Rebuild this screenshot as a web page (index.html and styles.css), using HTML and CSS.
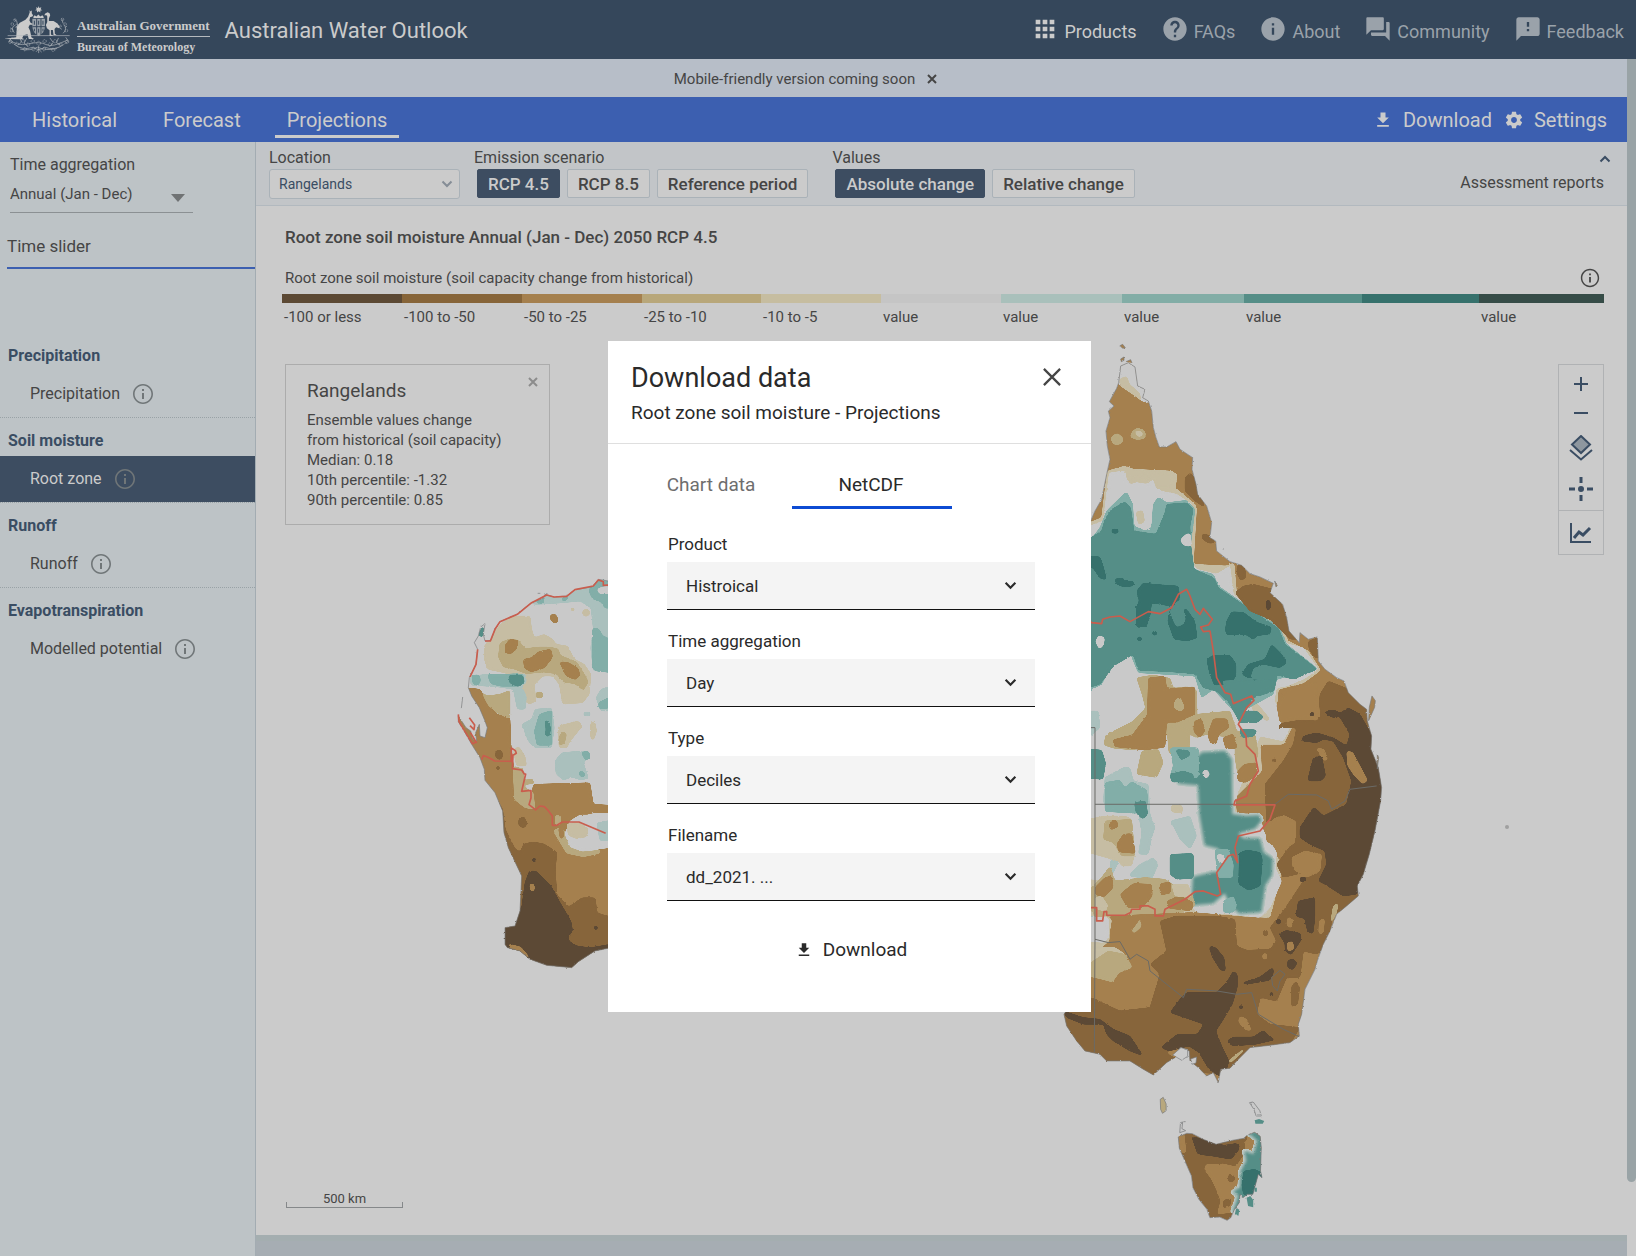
FILE: index.html
```html
<!DOCTYPE html>
<html lang="en">
  <head>
    <title>Australian Water Outlook</title>
    <meta charset="utf-8">
    <meta name="viewport" content="width=device-width, initial-scale=1">
    <link rel="stylesheet" href="styles.css">
  </head>
  <body>

  <!-- shared icons -->
  <svg class="sprite" aria-hidden="true">
    <symbol id="i-apps" viewBox="0 0 24 24"><path d="M4 8h4V4H4v4zm6 12h4v-4h-4v4zm-6 0h4v-4H4v4zm0-6h4v-4H4v4zm6 0h4v-4h-4v4zm6-10v4h4V4h-4zm-6 4h4V4h-4v4zm6 6h4v-4h-4v4zm0 6h4v-4h-4v4z"/></symbol>
    <symbol id="i-help" viewBox="0 0 24 24"><path d="M12 2C6.48 2 2 6.48 2 12s4.48 10 10 10 10-4.48 10-10S17.52 2 12 2zm1 17h-2v-2h2v2zm2.07-7.75l-.9.92C13.45 12.9 13 13.5 13 15h-2v-.5c0-1.1.45-2.1 1.17-2.83l1.24-1.26c.37-.36.59-.86.59-1.41 0-1.1-.9-2-2-2s-2 .9-2 2H8c0-2.21 1.79-4 4-4s4 1.79 4 4c0 .88-.36 1.68-.93 2.25z"/></symbol>
    <symbol id="i-info" viewBox="0 0 24 24"><path d="M12 2C6.48 2 2 6.48 2 12s4.48 10 10 10 10-4.48 10-10S17.52 2 12 2zm1 15h-2v-6h2v6zm0-8h-2V7h2v2z"/></symbol>
    <symbol id="i-forum" viewBox="0 0 24 24"><path d="M21 6h-2v9H6v2c0 .55.45 1 1 1h11l4 4V7c0-.55-.45-1-1-1zm-4 6V3c0-.55-.45-1-1-1H3c-.55 0-1 .45-1 1v14l4-4h10c.55 0 1-.45 1-1z"/></symbol>
    <symbol id="i-feedback" viewBox="0 0 24 24"><path d="M20 2H4c-1.1 0-1.99.9-1.99 2L2 22l4-4h14c1.1 0 2-.9 2-2V4c0-1.1-.9-2-2-2zm-7 12h-2v-2h2v2zm0-4h-2V6h2v4z"/></symbol>
    <symbol id="i-download" viewBox="0 0 24 24"><path d="M19 9h-4V3H9v6H5l7 7 7-7zM5 18v2h14v-2H5z"/></symbol>
    <symbol id="i-settings" viewBox="0 0 24 24"><path d="M19.43 12.98c.04-.32.07-.64.07-.98s-.03-.66-.07-.98l2.11-1.65c.19-.15.24-.42.12-.64l-2-3.46c-.12-.22-.39-.3-.61-.22l-2.49 1c-.52-.4-1.08-.73-1.69-.98l-.38-2.65C14.46 2.18 14.25 2 14 2h-4c-.25 0-.46.18-.49.42l-.38 2.65c-.61.25-1.17.59-1.69.98l-2.49-1c-.23-.09-.49 0-.61.22l-2 3.46c-.13.22-.07.49.12.64l2.11 1.65c-.04.32-.07.65-.07.98s.03.66.07.98l-2.11 1.65c-.19.15-.24.42-.12.64l2 3.46c.12.22.39.3.61.22l2.49-1c.52.4 1.08.73 1.69.98l.38 2.65c.03.24.24.42.49.42h4c.25 0 .46-.18.49-.42l.38-2.65c.61-.25 1.17-.59 1.69-.98l2.49 1c.23.09.49 0 .61-.22l2-3.46c.12-.22.07-.49-.12-.64l-2.11-1.65zM12 15.5c-1.93 0-3.5-1.57-3.5-3.5s1.57-3.5 3.5-3.5 3.5 1.57 3.5 3.5-1.57 3.5-3.5 3.5z"/></symbol>
    <symbol id="i-info-o" viewBox="0 0 24 24"><path d="M11 17h2v-6h-2v6zm1-15C6.48 2 2 6.48 2 12s4.48 10 10 10 10-4.48 10-10S17.52 2 12 2zm0 18.400c-4.630 0-8.400-3.770-8.400-8.400s3.770-8.400 8.400-8.400 8.400 3.770 8.400 8.400-3.770 8.400-8.400 8.400zM11 9h2V7h-2v2z"/></symbol>
    <symbol id="i-chevron" viewBox="0 0 12 12"><path d="M1.500 3.500L6 8l4.500-4.500" fill="none" stroke="currentColor" stroke-width="2"/></symbol>
    <symbol id="i-close" viewBox="0 0 20 20"><path d="M1 1l18 18M19 1L1 19" fill="none" stroke="currentColor" stroke-width="2.500"/></symbol>
    <symbol id="i-close-bold" viewBox="0 0 10 10"><path d="M1 1l8 8M9 1L1 9" fill="none" stroke="currentColor" stroke-width="2"/></symbol>
  </svg>

  <header class="masthead">
    <svg class="crest" viewBox="14 12 206 156" aria-label="Commonwealth Coat of Arms" role="img">
      <path d="M116 17l2 6 6-2-2 6 5 3-6 1 0 6-5-4-5 4 0-6-6-1 5-3-2-6 6 2z"/>
      <path d="M88 30l4 4 3-4 0 9 4 6-2 4-7 2-2 10 4 8 7 2-1 3-9 0-4 8 5 10 4 20 8 5-16 0-4-14-12 3-4 9 8 3-16 0-46-1 36-5 2-34 9-10 17-9 8-9 5-14z"/>
      <path d="M136 40l7-4 6 3 2 6-4 10 0 8 14 0 12 7 7 10-2 5-9-3-5 5 1 14 6 5-10-1-2-15-6 0 0 14 8 4-12 0 0-17-8-6-3-10 4-9 0-17-2-4-7 0z"/>
      <path d="M97 56h38v22q0 21-19 30-19-9-19-30z" class="shield"/>
      <path class="shield-line" d="M97 80h38M110 56v50M123 56v50M103 62v12M116 62v12M129 62v12M103 86v8M116 86v12M129 86v8"/>
      <path d="M100 50l4-5 5 4 6-6 6 6 6-4 4 5v4h-31z"/>
      <path class="twig" d="M22 107h188M28 118q20 22 56 14t54 2 66-14M40 132q26 22 60 10 16 14 34 0 30 12 58-8M60 148q30 6 52-6 28 12 60 4M116 138v22M108 156l8-8 9 9M36 112l-10 12 12 6M58 112l6 14-10 10M80 114l-8 16 12 10M150 114l10 14-10 12M176 114l-6 14 12 8M198 112l8 12-12 8M42 98q-12-16 2-22M38 88l-8-4M46 84l6-6-2-14-8-6M50 96l8-10M190 100q14-14 2-26M186 88l-8-6M196 82l6-4M190 70l-4-14"/>
      <g class="leaves"><circle cx="44" cy="60" r="4"/><circle cx="36" cy="72" r="4"/><circle cx="50" cy="76" r="4"/><circle cx="34" cy="92" r="4"/><circle cx="188" cy="58" r="4"/><circle cx="196" cy="72" r="4"/><circle cx="182" cy="78" r="3"/><circle cx="200" cy="92" r="4"/><circle cx="30" cy="126" r="5"/><circle cx="50" cy="132" r="5"/><circle cx="68" cy="124" r="5"/><circle cx="84" cy="134" r="5"/><circle cx="74" cy="148" r="5"/><circle cx="98" cy="124" r="5"/><circle cx="100" cy="148" r="5"/><circle cx="116" cy="130" r="6"/><circle cx="132" cy="148" r="5"/><circle cx="134" cy="124" r="5"/><circle cx="150" cy="134" r="5"/><circle cx="166" cy="124" r="5"/><circle cx="160" cy="150" r="5"/><circle cx="182" cy="134" r="5"/><circle cx="202" cy="126" r="5"/></g>
    </svg>
    <div class="agency">
      <span class="agency-gov">Australian Government</span>
      <span class="agency-bom">Bureau of Meteorology</span>
    </div>
    <h1 class="site-title">Australian Water Outlook</h1>
    <nav class="topnav" aria-label="Site">
      <a href="#" class="active"><svg><use href="#i-apps"/></svg>Products</a>
      <a href="#"><svg><use href="#i-help"/></svg>FAQs</a>
      <a href="#"><svg><use href="#i-info"/></svg>About</a>
      <a href="#"><svg><use href="#i-forum"/></svg>Community</a>
      <a href="#"><svg><use href="#i-feedback"/></svg>Feedback</a>
    </nav>
  </header>

  <div class="viewport">
    <div class="page">

      <div class="notice">
        Mobile-friendly version coming soon
        <button type="button" aria-label="Dismiss"><svg><use href="#i-close-bold"/></svg></button>
      </div>

      <div class="tabs">
        <a href="#">Historical</a>
        <a href="#">Forecast</a>
        <a href="#" class="active">Projections</a>
        <div class="tools">
          <button type="button"><svg><use href="#i-download"/></svg>Download</button>
          <button type="button"><svg><use href="#i-settings"/></svg>Settings</button>
        </div>
      </div>

      <div class="columns">

        <aside class="sidebar">
          <div class="aggregation">
            <label for="side-agg">Time aggregation</label>
            <div class="select">
              <select id="side-agg"><option>Annual (Jan - Dec)</option></select>
              <svg viewBox="0 0 14 8"><path d="M0 0h14L7 8z"/></svg>
            </div>
          </div>
          <h2 class="slider-title">Time slider</h2>

          <section class="group">
            <h3>Precipitation</h3>
            <a href="#">Precipitation <svg><use href="#i-info-o"/></svg></a>
          </section>
          <section class="group">
            <h3>Soil moisture</h3>
            <a href="#" class="active">Root zone <svg><use href="#i-info-o"/></svg></a>
          </section>
          <section class="group">
            <h3>Runoff</h3>
            <a href="#">Runoff <svg><use href="#i-info-o"/></svg></a>
          </section>
          <section class="group">
            <h3>Evapotranspiration</h3>
            <a href="#">Modelled potential <svg><use href="#i-info-o"/></svg></a>
          </section>
        </aside>

        <main class="content">
          <div class="filters">
            <div class="filter location">
              <label for="location">Location</label>
              <div class="select">
                <select id="location"><option>Rangelands</option></select>
                <svg><use href="#i-chevron"/></svg>
              </div>
            </div>
            <div class="filter">
              <span class="filter-label">Emission scenario</span>
              <div class="choices">
                <button type="button" class="active">RCP 4.5</button>
                <button type="button">RCP 8.5</button>
                <button type="button">Reference period</button>
              </div>
            </div>
            <div class="filter">
              <span class="filter-label">Values</span>
              <div class="choices">
                <button type="button" class="active">Absolute change</button>
                <button type="button">Relative change</button>
              </div>
            </div>
            <div class="reports">
              <button type="button" aria-label="Collapse filters"><svg><use href="#i-chevron"/></svg></button>
              <a href="#">Assessment reports</a>
            </div>
          </div>

          <div class="legend">
            <h2>Root zone soil moisture Annual (Jan - Dec) 2050 RCP 4.5</h2>
            <div class="legend-head">
              <span>Root zone soil moisture (soil capacity change from historical)</span>
              <svg><use href="#i-info-o"/></svg>
            </div>
            <ol class="scale">
              <li class="s1">-100 or less</li>
              <li class="s2">-100 to -50</li>
              <li class="s3">-50 to -25</li>
              <li class="s4">-25 to -10</li>
              <li class="s5">-10 to -5</li>
              <li class="s6">value</li>
              <li class="s7">value</li>
              <li class="s8">value</li>
              <li class="s9">value</li>
              <li class="s10"></li>
              <li class="s11">value</li>
            </ol>
          </div>

          <div class="stage">
            <svg class="map" viewBox="256 340 1371 895" preserveAspectRatio="xMinYMin meet" role="img" aria-label="Map of Australia">
              <defs>
                <filter id="rough" x="-5%" y="-5%" width="110%" height="110%" color-interpolation-filters="sRGB">
                  <feTurbulence type="fractalNoise" baseFrequency=".12" numOctaves="3" seed="4"/>
                  <feDisplacementMap in="SourceGraphic" scale="6" xChannelSelector="R" yChannelSelector="G"/>
                </filter>
                <!-- rounds off the corners of a contour -->
                <filter id="soften" x="-20%" y="-20%" width="140%" height="140%" color-interpolation-filters="sRGB">
                  <feGaussianBlur stdDeviation="5"/>
                  <feComponentTransfer><feFuncA type="linear" slope="12" intercept="-4.300"/></feComponentTransfer>
                </filter>
                <path id="west" d="M570 70L534 90 505 85 490 103 485 108 435 116 410 135 372 138 345 130 340 142 305 155 285 170 262 190 210 212 195 235 183 268 165 270 160 250 165 218 152 228 145 255 133 275 143 295 138 340 118 380 115 410 125 435 148 470 165 510 172 530 165 560 150 555 148 520 137 545 140 570 128 565 122 540 108 530 85 495 85 512 105 545 125 580 150 620 163 655 165 688 195 725 218 780 222 845 235 890 275 975 272 1040 270 1080 255 1125 225 1130 225 1180 232 1190 270 1200 300 1225 350 1243 425 1250 445 1232 495 1200 534 1192 570 1180z"/>
                <clipPath id="west-clip"><use href="#west"/></clipPath>
                <path id="east" d="M30 600L60 575 75 540 95 505 110 430 120 385 112 345 108 300 120 260 115 240 132 225 118 212 140 172 146 155 152 105 175 95 195 108 203 165 225 175 218 200 235 210 245 240 250 290 258 320 268 348 290 348 318 332 330 355 368 380 366 415 378 460 383 490 410 525 425 575 420 620 437 630 440 660 480 692 515 703 540 728 570 738 610 757 600 785 638 820 650 860 657 900 688 935 690 905 715 925 742 918 745 990 765 1015 800 1040 822 1050 835 1085 870 1120 890 1135 892 1170 905 1215 903 1255 925 1310 935 1370 932 1410 915 1500 898 1570 880 1630 862 1665 865 1695 830 1725 800 1750 780 1800 760 1840 742 1890 735 1915 705 1975 695 2050 685 2080 688 2115 660 2135 600 2143 540 2150 500 2190 480 2212 452 2215 445 2255 430 2225 410 2235 385 2210 360 2190 358 2160 330 2150 315 2180 290 2195 250 2232 220 2215 180 2190 110 2190 90 2170 45 2160 20 2130 -10 2085 -18 2050 -5 2030 30 2000z"/>
                <clipPath id="east-clip"><use href="#east"/></clipPath>
                <path id="tas" d="M322 228L345 217 360 218 390 235 425 250 470 238 500 232 510 222 530 214 545 226 548 260 546 330 550 350 540 340 530 380 525 400 510 400 498 410 490 400 488 425 475 445 465 470 455 478 435 468 408 470 400 445 378 415 362 380 358 345 340 300 325 262z"/>
                <clipPath id="tas-clip"><use href="#tas"/></clipPath>
              </defs>

              <!-- Western Australia -->
              <g transform="translate(430 550) scale(.3333)">
                <g filter="url(#rough)">
                  <g clip-path="url(#west-clip)" class="contours">
                    <use href="#west" class="c-white"/>
                    <path class="c-ice" d="M300 160L345 130 410 130 480 105 540 80 580 80V360H490L482 290 490 235 483 170 450 150 400 155 330 160z"/>
                    <path class="c-aqua" d="M315 150l25-12 8 12-18 10zM395 140l20-6 0 8-16 12zM480 108l30-20 30 4v80l-15 0-12-20-25-8-10-20z"/>
                    <path class="c-aqua" d="M488 230l20 5 10 20 30 10V365l-50-5-12-10z"/>
                    <path class="c-white" d="M500 115l20-8 20 0v20l-30 2z"/>
                    <path class="c-teal" d="M146 250l14-30 2 30-8 10z"/>
                    <path class="c-cream" d="M215 215l40-20 45 0 5 40 8 25 30-10 25 15 10 15 35 5 20 40 30 15 20 30-5 60-20 25-60 5-10-60-20-25-30 0-25 25 5 50-20 10-25-20-10-35-10-30-30-10-50-10-10-30 0-40z"/>
                    <path class="c-tan" d="M210 275l30-12 25 5 20 25 40-5 30 0 30 5 5 20 50 20 25 40 10 20-15 25-25-20-35-5-20-25-40-5-50 5-40-15-30-5-15-30z"/>
                    <path class="c-brown" d="M225 283l15-19 25 5-5 25-18 15-15-3zM280 325l25-5 20-18 38-8 5 25-25 32-40 12-20-12zM388 332l25 2 32 18 5 22-15 12-27-12zM360 192l16-4 10 20-10 10-14-10z"/>
                    <path class="c-cream" d="M458 178l14-5 10 14-12 10-12-4zM385 525l60-15 12 15-20 25-20 25-5 15-25 0zM482 515l12-5 6 30-10 30-8-10zM422 170h12v10h-12z"/>
                    <path class="c-tan" d="M386 560l12-20 12 8-6 27-16 10zM318 423h20v18h-20z"/>
                    <path class="c-ice" d="M122 375l50-5 115 0 2 25-15 10 15 30-2 40-25 0-12-60-50-8-78-4zM275 520l30-15 10-30 50-5 8 60-8 60-50 0-20-20zM375 630l20-25 55-5 25 5 5 10-20 20 15 45-20 8-30-10-25 10-22-20zM498 440l15-25 30-10v75l-30 0zM461 483h20v12h-20zM500 810l40-10v80l-30-5-10-30z"/>
                    <path class="c-aqua" d="M126 373l22-2 4 20-10 14-14-8zM172 370l60 0 20-2 28 2 2 28-20 8-50 0-30-8zM313 540l15-50 38-12 0 105-45 0zM453 603l24-2 4 18-14 10zM505 455l40-20v35l-38 4zM506 846l14 5 6 20-16 2zM448 658l18 8-4 14-14-6z"/>
                    <path class="c-teal" d="M236 373l42 0 6 22-20 12-26-12zM344 508l12 2 6 22-4 25-12-2 2-22z"/>
                    <path class="c-brown" d="M60 405L150 415 165 440 200 490 240 500 243 580 250 640 255 750 300 770 310 700 480 695 490 760 580 765 580 785 490 785 430 800 400 850 385 870 440 905 590 885V1300H60z"/>
                    <path class="c-tan" d="M150 415l20 20 40-5 30-12 0 85-35-15-30-25zM250 645l30 10 0 50 30 20 5 50-30-5-32-25zM250 690l60-5 5 12-60 8zM370 840l15-10 20 10 15 50 30 10 60-5 0 12-50 10-50-10zM376 793h16v29h-16z"/>
                    <path class="c-white" d="M405 850l15-40 30-18 50 0 90 30v60l-60 0-30 14-45 5-35-15z"/>
                    <path class="c-cream" d="M410 820l30-8 35 20-5 25-30 6-25-10zM250 600l15-15 20 30 5 30-30 0z"/>
                    <path class="c-ice" d="M500 815l60-10v60l-50 5z"/>
                    <path class="c-dark" d="M198 740l20 35 8 60 30 60 15 8 10-25 30-5 30 5 40 25-5 55 5 75 35 35 40-28 40 0 5 45 30 10 60 0v70l-60 30-80 60-250 0-40-80 60-90-80-200zM266 803l16-7 10 22-10 14-16-8zM198 598l16 0 6 16-10 14-14-10zM199 645h10v12h-10z"/>
                    <path class="c-deep" d="M298 960l20 0 45 45 30 55 30 50 5 30-12 15 0 15 25 15 40 5 60-10v120H200V1110l75-40 10-75zM307 921h11v12h-11zM492 1124h11v12h-11z"/>
                    <path class="c-brown" d="M298 1000l14-2 2 18-10 8zM232 1178l40 10 30 35-30-10-30-20zM385 830h14l2 30-10 5z"/>
                  </g>
                  <use href="#west" class="coast"/>
                  <path class="coast" d="M98 438l-4 34M323 127h8"/>
                </g>
                <path class="region" d="M570 100L520 103 520 92 505 87 490 105 435 116 410 136 372 138 350 132 305 155 262 190 210 212 195 235 181 270 165 270M143 295L138 340 120 378M85 490l2 22 40 66 12-4-18-30M118 500l16 22-2 14-12-12M155 626l5-12 12 4 12 6 10 6 50 1 0-40 12 8 3 8-10 6-2 40 28 4 8 12 4 0-12 52 20-2 8 0 0 22-6 20 20 16 12-12 14 2 12 12 12 16 0 28 14 0 16-10h50l80 34"/>
              </g>

              <!-- Eastern states -->
              <g transform="translate(1070 330) scale(.3333)">
                <g filter="url(#rough)">
                  <g clip-path="url(#east-clip)" class="contours">
                    <use href="#east" class="c-brown"/>
                    <path class="c-white" d="M140 155L145 90H240V215L215 210 200 190 165 170z"/>
                    <path class="c-cream" d="M148 145l22-10 8 25 30 25 8 30-14-16-50-34z"/>
                    <path class="c-tan" d="M126 315l17-8 18 16-8 16-20 2-10-14zM180 318l8-18 16-10 22 12 0 20-24 4z"/>
                    <path class="c-cream" d="M193 303l16-4 12 10-14 10z"/>

                    <path class="c-cream" d="M20 590L95 560 112 420 165 405 190 415 300 420 322 430 315 470 345 495 380 525 370 700 470 705 492 695 500 790 585 860 632 885 655 930 715 960 752 1018 700 1056 625 1075 620 1130 675 1170 640 1240 570 1240 575 1320 495 1400 500 1450 640 1600 600 1760 370 1750 120 1850 20 1850z"/>
                    <path class="c-white" d="M20 600L100 570 118 425 165 420 170 450 230 460 260 440 270 480 320 490 365 520 362 690 380 715 440 730 480 705 490 790 575 865 625 888 650 938 700 950 745 1015 700 1045 650 1065 620 1070 612 1110 640 1150 660 1120 668 1170 640 1230 570 1215 540 1290 500 1395 490 1450 570 1450 580 1500 620 1565 615 1610 635 1650 600 1730 570 1760 490 1750 380 1745 340 1690 300 1655 120 1650 20 1640z"/>
                    <path class="c-cream" d="M170 435l60-5 60-5 20 8-10 40-40 0-10-30-40 6-30 10zM198 543l20-5 6 34-18 10zM540 1110l20 5 40 50-10 5-40-30z"/>
                    <path class="c-aqua" d="M55 635L90 590 110 540 150 500 170 482 188 520 192 585 225 600 245 590 250 520 265 498 290 515 350 508 375 535 362 640 372 715 430 730 445 765 560 845 628 888 650 940 745 1015 620 1045 610 1090 500 1150 430 1075 395 1100 375 1035 205 1025 180 965 125 1000 95 1060 55 1080z"/>
                    <path class="c-teal" d="M55 625L95 600 105 565 125 535 165 512 182 530 192 600 258 610 285 545 290 520 350 515 370 535 360 585 362 640 372 715 432 740 445 770 540 835 625 892 645 940 742 1015 670 1045 622 1032 612 1080 550 1100 520 1150 575 1150 580 1160 560 1175 510 1175 480 1120 440 1080 400 1070 375 1028 300 1022 205 1018 190 970 130 1005 90 1060 55 1070z"/>
                    <path class="c-white" d="M330 628l20-20 12 0 2 38-20-2zM76 930l12-17 16 8-4 22-12 12z"/>
                    <path class="c-pine" d="M50 675l40 2 10 30 10 40-20-5-20-30-20-10zM134 743l22-2 15 10 20 0 0 14-32 2-20-8zM124 595l20-2 2 14-20 0zM200 780l20-25 30 5 75 5 5 40-30 20-55-10-5 40-10 30-30 5-2-60 10-20zM293 870l8-35 18-15 8 60 12 5 10-20-10-35 15 10 20 30 8 50-30 10-40-5zM470 870l15-28 35 2 40 30 45 15-5 20-40 5-10 12-20-15-60 0-4-15zM410 985l20-12 50 0 18 25 0 40-15 20-50 5-15-40zM515 1030l20-30 50-15 20-45 30 30 15 25-20 15-50-10-30 10-10 30 35 10-10 6zM247 901h14v12h-14zM202 917h13v13h-13z"/>
                    <path class="c-teal" d="M300 840l20-25 18 35 0 30-18 8-10-20z"/>

                    <path class="c-dark" d="M345 440l15-15 15 15 30 90-30-20-30-30zM396 608l22 5 20 22-22 2-20-14zM501 701l22 5 6 32-16 12-12-22zM520 765l30-5 60 15 80 150-30 0-60-60-60-25-45-55zM715 930l30-10 5 60-15 0-18-25z"/>
                    <path class="c-deep" d="M588 808h13v26l-10 6zM905 1120h20v60h-20z"/>

                    <!-- central patches -->
                    <path class="c-tan" d="M200 1040l50-8 50 10 10 30 40-5 30 10 2 110-20 5-5 60 20 5-10 30-40-15-30-5-5-60-100 50-60-5-30-10 5-30 80-40 40-40-10-40z"/>
                    <path class="c-brown" d="M235 1040l50-4 5 35 40 0 45-4 0 85-35 22-50 0-5 75-60 8-90-10-8-20 60-15 45-60z"/>
                    <path class="c-tan" d="M313 1110l17-12 14 32-12 12-20-12zM290 1190l90-40 100-10 20 60-10 20-80-10-30 10-60-30zM215 1260l50-5 15 40-20 45-60-10zM495 1200l60 10 10 60-20 50-40 20-10-60z"/>
                    <path class="c-brown" d="M373 1170l22-7 10 37-17 22-17-22zM413 1210l17-47 42 0 5 27-30 20-10 32-17-8zM458 1220l32-12 12 44-34 2zM503 1320l20-20 40-5-5 40-30 20-25-5z"/>
                    <path class="c-teal halo" d="M395 1265l70-5 20 25 2 165 40 5 40-2 8 15-20 25-50 15 15 15 50 0 10 40 28 20-2 50-20 30-12 80-65 5-25-20-20-40-35 30-65 5 5-85 60-15 30 0 5-40-20-30-40-10-15-90-5-90-60-5 0-20z"/>
                    <path class="c-aqua" d="M300 1250l85 0 0 90-65 5-20-10 10-30zM435 1555l40 0 15 45-2 40-45 0-5-50zM460 1710l30-15 10 30-10 20-30 0z"/>
                    <path class="c-teal" d="M316 1256l40 2 5 15-28 15zM300 1330l40-10 30 10 0 20-65 4zM300 1570l70-2 0 75-50 2-20-15z"/>
                    <path class="c-white" d="M396 1323l14-8 10 16-14 14zM438 1573l16-4 12 16-14 16z"/>
                    <path class="c-pine" d="M508 1565l25-8 38 8 6 20-6 80-35 14-30-20z"/>
                    <path class="c-teal" d="M55 1255l40 2 12 40-8 48-44-2zM520 1140l40 0 18 15-18 15-35-2zM508 1193l54 4-10 19-36 4zM455 1050l155-5-5 30-60 25-45 20z"/>
                    <path class="c-ice" d="M55 1140l30 0 5 50-35 30zM105 1340l55-30 20 0 10 40 45 10 5 90 15 40-10 30-10 50-30 0 10-60-10-70-90-10-15-15zM300 1470l60-15 20 60-20 40-30-30-20-40zM120 1595l20-30 5 30-20 40zM210 1600l40-20 15 20-20 45-70-10z"/>
                    <path class="c-aqua" d="M105 1355l45-8 15 25 20-20 45 25 5 40-40 30-90-5z"/>
                    <path class="c-teal" d="M193 1415l35-5 5 40-15 15-20-20z"/>
                    <path class="c-cream" d="M55 1465l50-10 60 0 20 10 10 110-50 15-90-25zM135 1570l60-5-10 40-30 0zM303 1423l34 0 0 24-32-4z"/>
                    <path class="c-tan" d="M105 1470l80-5 10 110-40 0-25-40-30-10z"/>
                    <path class="c-brown" d="M116 1478l22-12 8 20-24 12zM140 1540l20-30 25-2 12 60-50-5z"/>
                    <path class="c-tan" d="M55 1680l40-40 25-35 15 45 90-10 60 5 30 20 50 20 10 40-110 50-170 10-40-60z"/>
                    <path class="c-brown" d="M75 1670l30-30 20-5 5 35-30 30-25-10zM150 1690l40-32 55 2 2 35-30 35-45 0zM270 1658l32-5 0 34-32 5zM290 1710l40-15 40 20-5 25-70-8z"/>
                    <path class="c-cream" d="M75 1700l20-4 20 30-10 16-30-10zM305 1660l50 0 10 40-50-5z"/>
                    <path class="c-ice" d="M55 1760l15-8 10 50-25 10z"/>

                    <!-- southern half -->
                    <path class="c-brown" d="M120 1755L370 1745 600 1765 700 1760V2300H-50V2030L63 1880 120 1830z"/>
                    <path class="c-cream" d="M55 1830l60-5 10-60-20-10-50 20zM55 1850l80 0 30 20-30 50-80 5z"/>
                    <path class="c-tan" d="M55 1900l60-40 50 10 22 40-40 15-20 28-30-8-42-10zM185 1800l20-25 5-20 4 32-22 20z"/>
                    <path class="c-white" d="M55 1760l60 0 2 55-15 20-47-5z"/>
                    <path class="c-dark" d="M270 1770L320 1755 440 1755 495 1765 500 1845 530 1858 600 1855 620 1830 600 1790 640 1740 700 1650 720 1620 640 1640 620 1600 680 1520 680 1470 640 1450 590 1480 585 1360 640 1290 670 1240 680 1190 620 1190 650 1165 745 1170 750 1090 775 1050 900 1100 960 1250V1480L900 1700 790 1750 770 1850 740 1870 700 1860 690 1940 650 1940 620 2010 570 2000 560 2050 600 2080 690 2090 660 2140 540 2150 470 2230 385 2225 250 2240 150 2210 -20 2170V2030L63 2000 150 2040 240 2030 270 1930 240 1900 290 1860z"/>
                    <path class="c-brown" d="M665 1580l40-20 50 10-5 50-40 20-40-25zM585 1480l45-25 45 20 0 60-40 25-45-30zM620 1120l30-50 90-20 10 110-60 5-60 10zM738 1250l24 5 12 32-14 2zM832 1260l20 10 40 75-20 15-40-50zM653 1758l16 6-5 29-14-10zM748 1768l16-5-4 44-14 2zM510 2055l20 10 15 35-20-4-20-24zM290 2165l40-20 25 20-30 20z"/>
                    <path class="c-deep" d="M805 1150l30-20 35 20 40 70 50 90V1480L895 1640 860 1690 820 1695 765 1660 745 1650 770 1600 765 1560 720 1540 690 1520 690 1490 730 1430 740 1435 760 1455 830 1420 845 1350 820 1280 790 1230 760 1225 740 1235 695 1230 700 1215 740 1205 790 1220 830 1245 840 1210zM770 1138l25 0 20 12-20 12-27-12zM719 1144h14v11h-14zM715 1340l15-60 25-5 12 60-15 15-38 0zM685 1710l50-10 0 60-6 50-16-8-10-40-25-5zM628 1810l20-12 45 10 0 20-30 45-18-15 0-20zM653 1888l17-4 12 12-14 22-16-10zM619 1764h13v16h-13zM417 1845l20 5 25 30 5 40-15-2-25-40zM300 2045l30-40 20-20 90 0 30-30 20-35 12 10 0 40-15 50-30 50-20 30 20 50 20 40-10 35-20 10-30-20-30-50-30-20-60 15-25-10 50-40 60 0 20-30zM510 1958l60-20 40-30 0 20-10 20-70 12zM470 2130l20-12 60 0 30-20 20 20 18 8-60 14-70 5zM-20 2040l60 20 50 5 40 30 50 20 40 60-40-15-50-30-20-20-10-30-60 0-50-20zM599 1984h11v12h-11zM507 2024h12v10h-12zM690 1638h18v15h-18z"/>
                    <path class="c-brown" d="M830 1260l18 4 45 85-15 10-25-25-20-30zM650 1838l18-8 4 24-18 8zM578 1868h13v17h-13z"/>
                    <path class="c-tan" d="M790 1725l15-10-5 30-20 40zM475 2190l50-40-5 12-40 35z"/>
                    <path class="c-dark" d="M665 1965l14-15 10 20-6 50-18 10zM580 1798h13v17h-13zM602 1286l20-4-8 16z"/>
                  </g>
                  <use href="#east" class="coast"/>
                  <path class="coast c-brown" d="M152 84l10-6 0 10-8 4zM906 1095l10 14-2 20-18 40 2-40zM150 44l8-4 8 10-8 2zM614 750l8 14-4 4zM922 1270l4 10-4 34 0-30zM458 654h4M168 92l14-6 4 10"/>
                  <path class="hole" d="M308 2172l25-22 20 6 0 20-18 12zM362 2184l18-6-2 18-12 4z"/>
                </g>
                <path class="border" d="M60 1190h15V1825l-2 338M75 1420H615l40-30 85 2 35 18 10 25 40-25 15-35 80-10M75 1825l40 10 35-3 30 53 20-15 35 20 5 30 100 80 10-25 90 5 60 10 45-5 20 65 75 45 48 22M605 1940l25-22 15 12-15 20-8 30-14-16z"/>
                <path class="region" d="M55 865L65 875 95 878 98 865 120 858 150 855 180 872 235 842 270 848 305 830 325 790 350 775 360 795 375 835 390 850 400 832 427 865 415 882 392 888 400 902 420 900 430 960 440 1040 465 1085 482 1090 490 1118 545 1095 552 1108 530 1130 505 1180 528 1215 530 1245 555 1270 565 1320 540 1360 530 1395 495 1410 492 1422H615L600 1465 570 1500 505 1515 495 1550 503 1595 490 1570 475 1575 440 1625 452 1690 442 1695 400 1680 375 1682 345 1705 285 1735 280 1755H255V1735L235 1725 210 1725 210 1735 185 1735 182 1745 165 1753H110V1742H102L98 1770H80V1730H55"/>
              </g>

              <!-- Tasmania -->
              <g transform="translate(1060 1060) scale(.3673 .3333)">
                <g filter="url(#rough)">
                  <g clip-path="url(#tas-clip)" class="contours">
                    <use href="#tas" class="c-dark"/>
                    <path class="c-brown" d="M318 225l20-8 5 60-15-5zM398 310l40 0 50-10 10-50 20-20 30 10-20 40-40 170-60 10 10-40-10-30-15-35-20-30zM510 205h50v60h-50z"/>
                    <path class="c-dark" d="M456 343l18 0 2 16-16 6zM445 418l22-6-4 22-20 8zM488 240l15 5 0 30-25 40-60-15-50-50z"/>
                    <path class="c-deep" d="M358 225l70 24 20 4 35-6 4 20-22 28-50-10-40-5z"/>
                    <path class="c-teal halo" d="M500 212h70v240H470l10-30 5-20-15-8 20-15 2-50 15-30-5-30 25 10 10-40-15-15z"/>
                    <path class="c-pine" d="M500 330l30-5 20 10v70l-50-2-5-30z"/>
                  </g>
                  <use href="#tas" class="coast"/>
                  <path class="coast c-tan" d="M273 115l8-6 8 20 0 20-10 8-5-12z"/>
                  <path class="coast c-white" d="M516 125l10-2 18 26 4 16-14 0-6-20zM326 215l2-30 6-2-2 20 10 6zM336 182h6"/>
                  <path class="c-teal" d="M530 178l12-4 14 6-4 8-20 0zM508 410l10-5 8 12 0 22-14-4zM480 440l8 6-2 18-10-4zM530 380h6v12h-6z"/>
                </g>
              </g>
              <circle class="islet" cx="1507" cy="826" r="2"/>
            </svg>

            <section class="popup">
              <h3>Rangelands</h3>
              <p>Ensemble values change<br>from historical (soil capacity)<br>Median: 0.18<br>10th percentile: -1.32<br>90th percentile: 0.85</p>
              <button type="button" aria-label="Close"><svg><use href="#i-close-bold"/></svg></button>
            </section>

            <div class="controls">
              <button type="button" aria-label="Zoom in"><svg viewBox="0 0 24 24"><path d="M12 5v14M5 12h14"/></svg></button>
              <button type="button" aria-label="Zoom out"><svg viewBox="0 0 24 24"><path d="M5 12h14"/></svg></button>
              <button type="button" class="tall" aria-label="Layers"><svg viewBox="0 0 24 26"><path class="tinted" d="M12 1l9 8.500-9 8.500-9-8.500z"/><path d="M1 15l11 9.500L23 15"/></svg></button>
              <button type="button" class="tall" aria-label="Locate"><svg viewBox="0 0 24 24"><circle cx="12" cy="12" r="2"/><path d="M12 0v6M12 18v6M0 12h6M18 12h6" stroke-width="3"/></svg></button>
              <button type="button" class="chart" aria-label="Chart"><svg viewBox="0 0 24 24"><path d="M2 2v19h20"/><path d="M5 17l5-6 4 3 7-7" stroke-width="3"/></svg></button>
            </div>

            <div class="scalebar">500 km</div>
          </div>

          <div class="footer"></div>
        </main>
      </div>
    </div>
    <div class="scrollbar"></div>
  </div>

  <div class="overlay">
    <div class="dialog" role="dialog" aria-modal="true" aria-labelledby="dialog-title">
      <div class="dialog-head">
        <h2 id="dialog-title">Download data</h2>
        <p>Root zone soil moisture - Projections</p>
        <button type="button" class="close" aria-label="Close"><svg><use href="#i-close"/></svg></button>
      </div>
      <div class="dialog-tabs">
        <button type="button">Chart data</button>
        <button type="button" class="active">NetCDF</button>
      </div>
      <form class="fields">
        <label for="product">Product</label>
        <div class="select">
          <select id="product"><option>Histroical</option></select>
          <svg><use href="#i-chevron"/></svg>
        </div>
        <label for="aggregation">Time aggregation</label>
        <div class="select">
          <select id="aggregation"><option>Day</option></select>
          <svg><use href="#i-chevron"/></svg>
        </div>
        <label for="type">Type</label>
        <div class="select">
          <select id="type"><option>Deciles</option></select>
          <svg><use href="#i-chevron"/></svg>
        </div>
        <label for="filename">Filename</label>
        <div class="select">
          <select id="filename"><option>dd_2021. ...</option></select>
          <svg><use href="#i-chevron"/></svg>
        </div>
        <button type="button" class="submit"><svg><use href="#i-download"/></svg>Download</button>
      </form>
    </div>
  </div>

  </body>
</html>
```
FILE: styles.css
```css
* {
  box-sizing: border-box;
}
html {
  height: 100%;
}
body {
  margin: 0;
  min-height: 100%;
  display: flex;
  flex-direction: column;
  position: relative;
  background: #cbcbcb;
  color: #454545;
  font-family: Roboto, "Liberation Sans", sans-serif;
  font-size: 16px;
  line-height: 20px;
}
h1, h2, h3, p, ol {
  margin: 0;
  padding: 0;
  font-weight: 400;
}
a {
  color: inherit;
  text-decoration: none;
}
button, select {
  font: inherit;
  color: inherit;
  background: none;
  border: 0;
  border-radius: 0;
  padding: 0;
  cursor: pointer;
}
svg {
  display: block;
  fill: currentColor;
}
.sprite {
  position: absolute;
  width: 0;
  height: 0;
}

.select {
  display: grid;
  align-items: center;
}
.select select {
  grid-area: 1 / 1;
  width: 100%;
  height: 100%;
  appearance: none;
}
.select svg {
  grid-area: 1 / 1;
  justify-self: end;
  pointer-events: none;
}

/* masthead */

.masthead {
  display: flex;
  align-items: center;
  height: 59px;
  padding: 0 12px 0 5px;
  background: #35475b;
  color: #cbcbcb;
}
.crest {
  width: 68px;
  height: 52px;
  margin-right: 4px;
}
.crest .shield {
  fill: #9aa2aa;
}
.crest .shield-line {
  stroke: #35475b;
  stroke-width: 3;
}
.crest .twig {
  fill: none;
  stroke: #b4b9be;
  stroke-width: 2;
}
.crest .leaves {
  fill: none;
  stroke: #a9afb6;
  stroke-width: 2;
  stroke-dasharray: 4 2;
}
.agency {
  display: flex;
  flex-direction: column;
  padding-top: 13px;
  font-family: "Liberation Serif", serif;
  font-weight: 700;
  line-height: 20px;
}
.agency-gov {
  border-bottom: 1px solid #b4b9be;
  font-size: 13px;
}
.agency-bom {
  font-size: 12px;
}
.site-title {
  margin-left: 15px;
  padding-top: 2px;
  font-size: 22px;
  line-height: 28px;
}
.topnav {
  display: flex;
  gap: 24px;
  margin-left: auto;
  padding-top: 5px;
  font-size: 18px;
  color: #9aa2aa;
}
.topnav a {
  display: flex;
  align-items: center;
  gap: 5px;
}
.topnav svg {
  width: 28px;
  height: 28px;
  margin-bottom: 6px;
}
.topnav .active {
  color: #cbcbcb;
}

.viewport {
  flex: 1;
  display: flex;
}
.page {
  flex: 1;
  min-width: 0;
  display: flex;
  flex-direction: column;
}
.scrollbar {
  width: 9px;
  margin-bottom: 74px;
  border-radius: 0 0 5px 5px;
  background: #99a3a6;
}

.notice {
  display: flex;
  align-items: center;
  justify-content: center;
  gap: 12px;
  height: 38px;
  padding: 2px 16px 0 0;
  background: #b7bec8;
  font-size: 15px;
}
.notice svg {
  width: 10px;
  height: 10px;
}

.tabs {
  display: flex;
  align-items: stretch;
  height: 45px;
  padding: 0 20px 4px;
  background: #3c5fb0;
  color: #cbcbcb;
  font-size: 20px;
}
.tabs a {
  display: flex;
  align-items: center;
  padding: 8px 12px 0;
  margin-right: 22px;
  border-bottom: 3px solid transparent;
}
.tabs .active {
  border-color: #cbcbcb;
}
.tools {
  display: flex;
  gap: 12px;
  margin-left: auto;
  padding-top: 5px;
}
.tools button {
  display: flex;
  align-items: center;
  gap: 10px;
}
.tools svg {
  width: 20px;
  height: 20px;
}

.columns {
  flex: 1;
  display: flex;
}

/* sidebar */

.sidebar {
  width: 256px;
  flex: none;
  border-right: 1px solid #a3acb2;
  background: #bdc3c6;
}
.aggregation {
  width: 183px;
  margin: 13px 0 0 10px;
}
.aggregation .select {
  height: 38px;
  border-bottom: 1px solid #8b9093;
}
.aggregation select {
  font-size: 15px;
}
.aggregation svg {
  width: 14px;
  height: 8px;
  margin: 8px 8px 0 0;
  color: #707374;
}
.slider-title {
  margin: 23px 0 64px 7px;
  padding-bottom: 11px;
  border-bottom: 2px solid #3c5fb0;
  font-size: 17px;
}
.group {
  border-bottom: 1px dotted #99a2a6;
}
.group:last-child {
  border-bottom: 0;
}
.group h3 {
  padding: 8px 8px 0;
  color: #3a4d63;
  font-size: 16px;
  font-weight: 700;
  line-height: 30px;
}
.group a {
  display: flex;
  align-items: center;
  gap: 11px;
  height: 46px;
  padding-left: 30px;
}
.group svg {
  width: 24px;
  height: 24px;
  color: #707678;
}
.group .active {
  background: #3d4d61;
  color: #cbcbcb;
}

/* filter bar */

.content {
  flex: 1;
  min-width: 0;
  display: flex;
  flex-direction: column;
}
.filters {
  display: flex;
  gap: 20px;
  height: 64px;
  padding: 4px 16px 0 13px;
  border-bottom: 1px solid #b2b9bf;
  background: #c2c5c8;
}
.filter label, .filter-label {
  display: block;
  line-height: 23px;
}
.location {
  width: 191px;
  margin-right: -6px;
}
.location .select {
  height: 30px;
  border: 1px solid #aab2b8;
  border-radius: 3px;
  background: #cbcbcb;
  color: #3a4d63;
  font-size: 14px;
}
.location select {
  padding-left: 9px;
}
.location svg {
  width: 12px;
  height: 12px;
  margin-right: 6px;
  color: #858d96;
}
.choices {
  display: flex;
  gap: 7px;
  padding: 0 4px 0 3px;
}
.choices button {
  height: 29px;
  padding: 0 10px;
  border: 1px solid #aab2b8;
  border-radius: 2px;
  background: #cbcbcb;
  font-size: 17px;
  font-weight: 500;
}
.choices .active {
  border-color: #3d4d61;
  background: #3d4d61;
  color: #cbcbcb;
}
.reports {
  display: flex;
  flex-direction: column;
  align-items: flex-end;
  gap: 8px;
  margin-left: auto;
  padding-top: 7px;
}
.reports a {
  padding-right: 7px;
}
.reports svg {
  width: 12px;
  height: 12px;
  transform: rotate(180deg);
  color: #3a4d63;
}

/* legend */

.legend {
  padding: 20px 23px 14px 26px;
}
.legend h2 {
  padding-left: 3px;
  font-size: 17px;
  font-weight: 500;
  line-height: 22px;
}
.legend-head {
  display: flex;
  align-items: center;
  justify-content: space-between;
  margin: 19px 3px 5px;
  font-size: 15px;
}
.legend-head svg {
  width: 22px;
  height: 22px;
}
.scale {
  display: grid;
  grid-template-columns: 120fr 120fr 120fr 119fr 120fr 120fr 121fr 122fr 118fr 117fr 125fr;
  list-style: none;
  font-size: 15px;
}
.scale li {
  padding: 4px 0 0 2px;
  border-top-width: 9px;
  border-top-style: solid;
  white-space: nowrap;
}
.s1 { border-color: #5c4934; }
.s2 { border-color: #876539; }
.s3 { border-color: #a5804e; }
.s4 { border-color: #b8a77a; }
.s5 { border-color: #c6bda0; }
.s6 { border-color: #c5c5c5; }
.s7 { border-color: #a9c0bb; }
.s8 { border-color: #82ada6; }
.s9 { border-color: #558e87; }
.s10 { border-color: #36716c; }
.s11 { border-color: #364c47; }

/* map */

.stage {
  flex: 1;
  position: relative;
  min-height: 600px;
}
.map {
  position: absolute;
  width: 100%;
}
.contours path {
  filter: url(#soften);
}
.c-deep { fill: #5c4935; }
.c-dark { fill: #87653b; }
.c-brown { fill: #a5804e; }
.c-tan { fill: #b8a87e; }
.c-cream { fill: #c6bda3; }
.c-white { fill: #c9c9c9; }
.c-ice { fill: #aac0bd; }
.c-aqua { fill: #82aea8; }
.c-teal { fill: #558e87; }
.c-pine { fill: #36716c; }
.halo {
  stroke: #c9ceca;
  stroke-width: 12;
  stroke-linejoin: round;
  paint-order: stroke;
}
.coast {
  stroke: #77787a;
  stroke-width: 2;
}
use.coast {
  fill: none;
}
.hole {
  fill: #cbcbcb;
  stroke: #77787a;
  stroke-width: 2;
}
.border {
  fill: none;
  stroke: #6a6a66;
  stroke-width: 3;
}
.region {
  fill: none;
  stroke: #c95d4d;
  stroke-width: 5;
  stroke-linejoin: round;
}
.islet {
  fill: #a0a0a0;
}

.popup {
  position: absolute;
  top: 23px;
  left: 29px;
  width: 265px;
  padding: 16px 21px 14px;
  border: 1px solid #acacac;
  background: #cbcbcb;
}
.popup h3 {
  padding-bottom: 9px;
  font-size: 19px;
}
.popup p {
  font-size: 15px;
}
.popup button {
  position: absolute;
  top: 12px;
  right: 11px;
  color: #8c8c8c;
}
.popup button svg {
  width: 10px;
  height: 10px;
}

.controls {
  position: absolute;
  top: 23px;
  right: 23px;
  width: 46px;
  padding-top: 4px;
  border: 1px solid #b0b2b4;
  color: #3a4d63;
}
.controls button {
  display: flex;
  align-items: center;
  justify-content: center;
  width: 100%;
  height: 29px;
}
.controls .tall {
  height: 41px;
}
.controls .chart {
  height: 44px;
  margin-top: 1px;
  border-top: 1px solid #b0b2b4;
}
.controls svg {
  width: 24px;
  height: 26px;
  stroke: currentColor;
  stroke-width: 2;
}
.controls path {
  fill: none;
}
.controls .tinted {
  fill: #8e979f;
}

.scalebar {
  position: absolute;
  left: 30px;
  bottom: 27px;
  width: 117px;
  border: 1px solid #85888a;
  border-top: 0;
  font-size: 13px;
  line-height: 16px;
  text-align: center;
  isolation: isolate;
}
/* keeps only short ticks at both ends */
.scalebar::before {
  content: "";
  position: absolute;
  z-index: -1;
  inset: 0 -1px 5px;
  background: #cbcbcb;
}
.footer {
  height: 21px;
  background: #a6adb3;
  border-top: 6px solid #a4aeb0;
}

/* download dialog */

.overlay {
  position: absolute;
  inset: 0;
  display: grid;
  place-items: center;
  padding: 97px 0 0 63px;
}
.dialog {
  width: 483px;
  padding-bottom: 50px;
  background: #fff;
  color: #2a2a2a;
}
.dialog-head {
  position: relative;
  padding: 20px 23px 18px;
  border-bottom: 1px solid #dfdfdf;
}
.dialog-head h2 {
  font-size: 27px;
  line-height: 34px;
}
.dialog-head p {
  padding-top: 6px;
  font-size: 19px;
  line-height: 24px;
}
.close {
  position: absolute;
  top: 27px;
  right: 30px;
  color: #454545;
}
.close svg {
  width: 18px;
  height: 18px;
}
.dialog-tabs {
  display: grid;
  grid-template-columns: 160px 160px;
  padding: 20px 0 0 24px;
  font-size: 19px;
}
.dialog-tabs button {
  height: 45px;
  padding-right: 2px;
  border-bottom: 3px solid transparent;
  color: #6e6e6e;
}
.dialog-tabs .active {
  border-color: #0d4bd3;
  color: #2a2a2a;
}
.fields {
  display: flex;
  flex-direction: column;
  padding: 15px 56px 0 59px;
}
.fields label {
  padding: 9px 1px 7px;
  font-size: 17px;
  line-height: 22px;
}
.fields .select {
  height: 48px;
  margin-bottom: 11px;
  border-bottom: 1px solid #111;
  background: #f4f4f4;
  font-size: 17px;
}
.fields select {
  padding-left: 19px;
}
.fields .select svg {
  width: 13px;
  height: 13px;
  margin-right: 18px;
}
.submit {
  display: flex;
  align-items: center;
  align-self: center;
  gap: 10px;
  margin-top: 26px;
  font-size: 19px;
  line-height: 24px;
}
.submit svg {
  width: 18px;
  height: 18px;
}
```
